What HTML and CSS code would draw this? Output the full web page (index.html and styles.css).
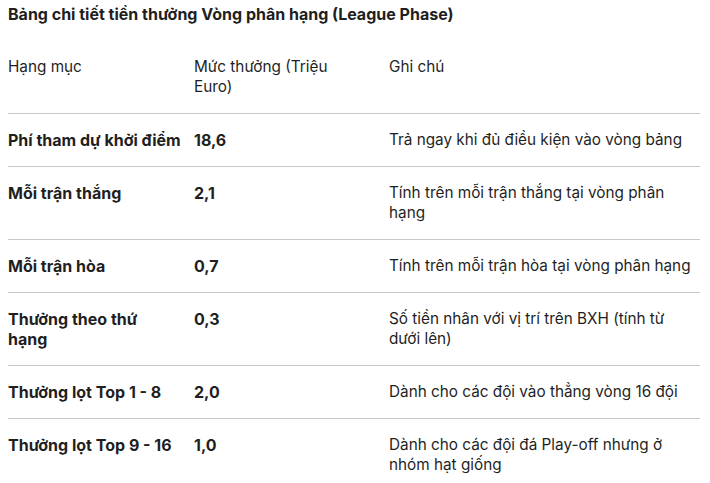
FILE: index.html
```html
<!DOCTYPE html>
<html lang="vi">
<head>
<meta charset="utf-8">
<link rel="stylesheet" href="styles.css">
</head>
<body>
<h2 class="title">Bảng chi tiết tiền thưởng Vòng phân hạng (League Phase)</h2>
<table class="prize">
  <colgroup>
    <col class="c1"><col class="c2"><col class="c3">
  </colgroup>
  <thead>
    <tr><th class="k1">Hạng mục</th><th class="k2">Mức thưởng (Triệu Euro)</th><th class="k3">Ghi chú</th></tr>
  </thead>
  <tbody>
    <tr><td class="b k1">Phí tham dự khởi điểm</td><td class="b k2">18,6</td><td class="k3">Trả ngay khi đủ điều kiện vào vòng bảng</td></tr>
    <tr><td class="b k1">Mỗi trận thắng</td><td class="b k2">2,1</td><td class="k3">Tính trên mỗi trận thắng tại vòng phân hạng</td></tr>
    <tr><td class="b k1">Mỗi trận hòa</td><td class="b k2">0,7</td><td class="k3">Tính trên mỗi trận hòa tại vòng phân hạng</td></tr>
    <tr><td class="b k1">Thưởng theo thứ<br>hạng</td><td class="b k2">0,3</td><td class="k3">Số tiền nhân với vị trí trên BXH (tính từ<br>dưới lên)</td></tr>
    <tr><td class="b k1">Thưởng lọt Top 1 - 8</td><td class="b k2">2,0</td><td class="k3">Dành cho các đội vào thẳng vòng 16 đội</td></tr>
    <tr><td class="b k1">Thưởng lọt Top 9 - 16</td><td class="b k2">1,0</td><td class="k3">Dành cho các đội đá Play-off nhưng ở nhóm hạt giống</td></tr>
  </tbody>
</table>
</body>
</html>
```
FILE: styles.css
```css
html, body {
  margin: 0;
  padding: 0;
  background: #ffffff;
}
body {
  padding: 4px 10px 0 8px;
  font-family: Inter, "Noto Sans", sans-serif;
  font-size: 15.3px;
  line-height: 20px;
  color: #1f1f1f;
}
.title {
  margin: 0 0 17px 0;
  font-size: 16px;
  line-height: 20px;
  font-weight: 700;
}
.prize {
  width: 692px;
  border-collapse: collapse;
  table-layout: fixed;
}
.c1 { width: 186px; }
.c2 { width: 195px; }
.c3 { width: 311px; }
.prize th, .prize td {
  text-align: left;
  vertical-align: top;
  padding: 16px 0 16px 0;
  font-size: 15.3px;
  line-height: 20px;
  font-weight: 400;
  border-bottom: 1px solid #c8c8c8;
}
.prize .k1 { padding-right: 8px; }
.prize .k2 { padding-right: 24px; }
.prize .k3 { padding-right: 0; }
.prize td.b {
  font-size: 16px;
  font-weight: 700;
}
.prize tbody tr:last-child td {
  border-bottom: none;
}
```
